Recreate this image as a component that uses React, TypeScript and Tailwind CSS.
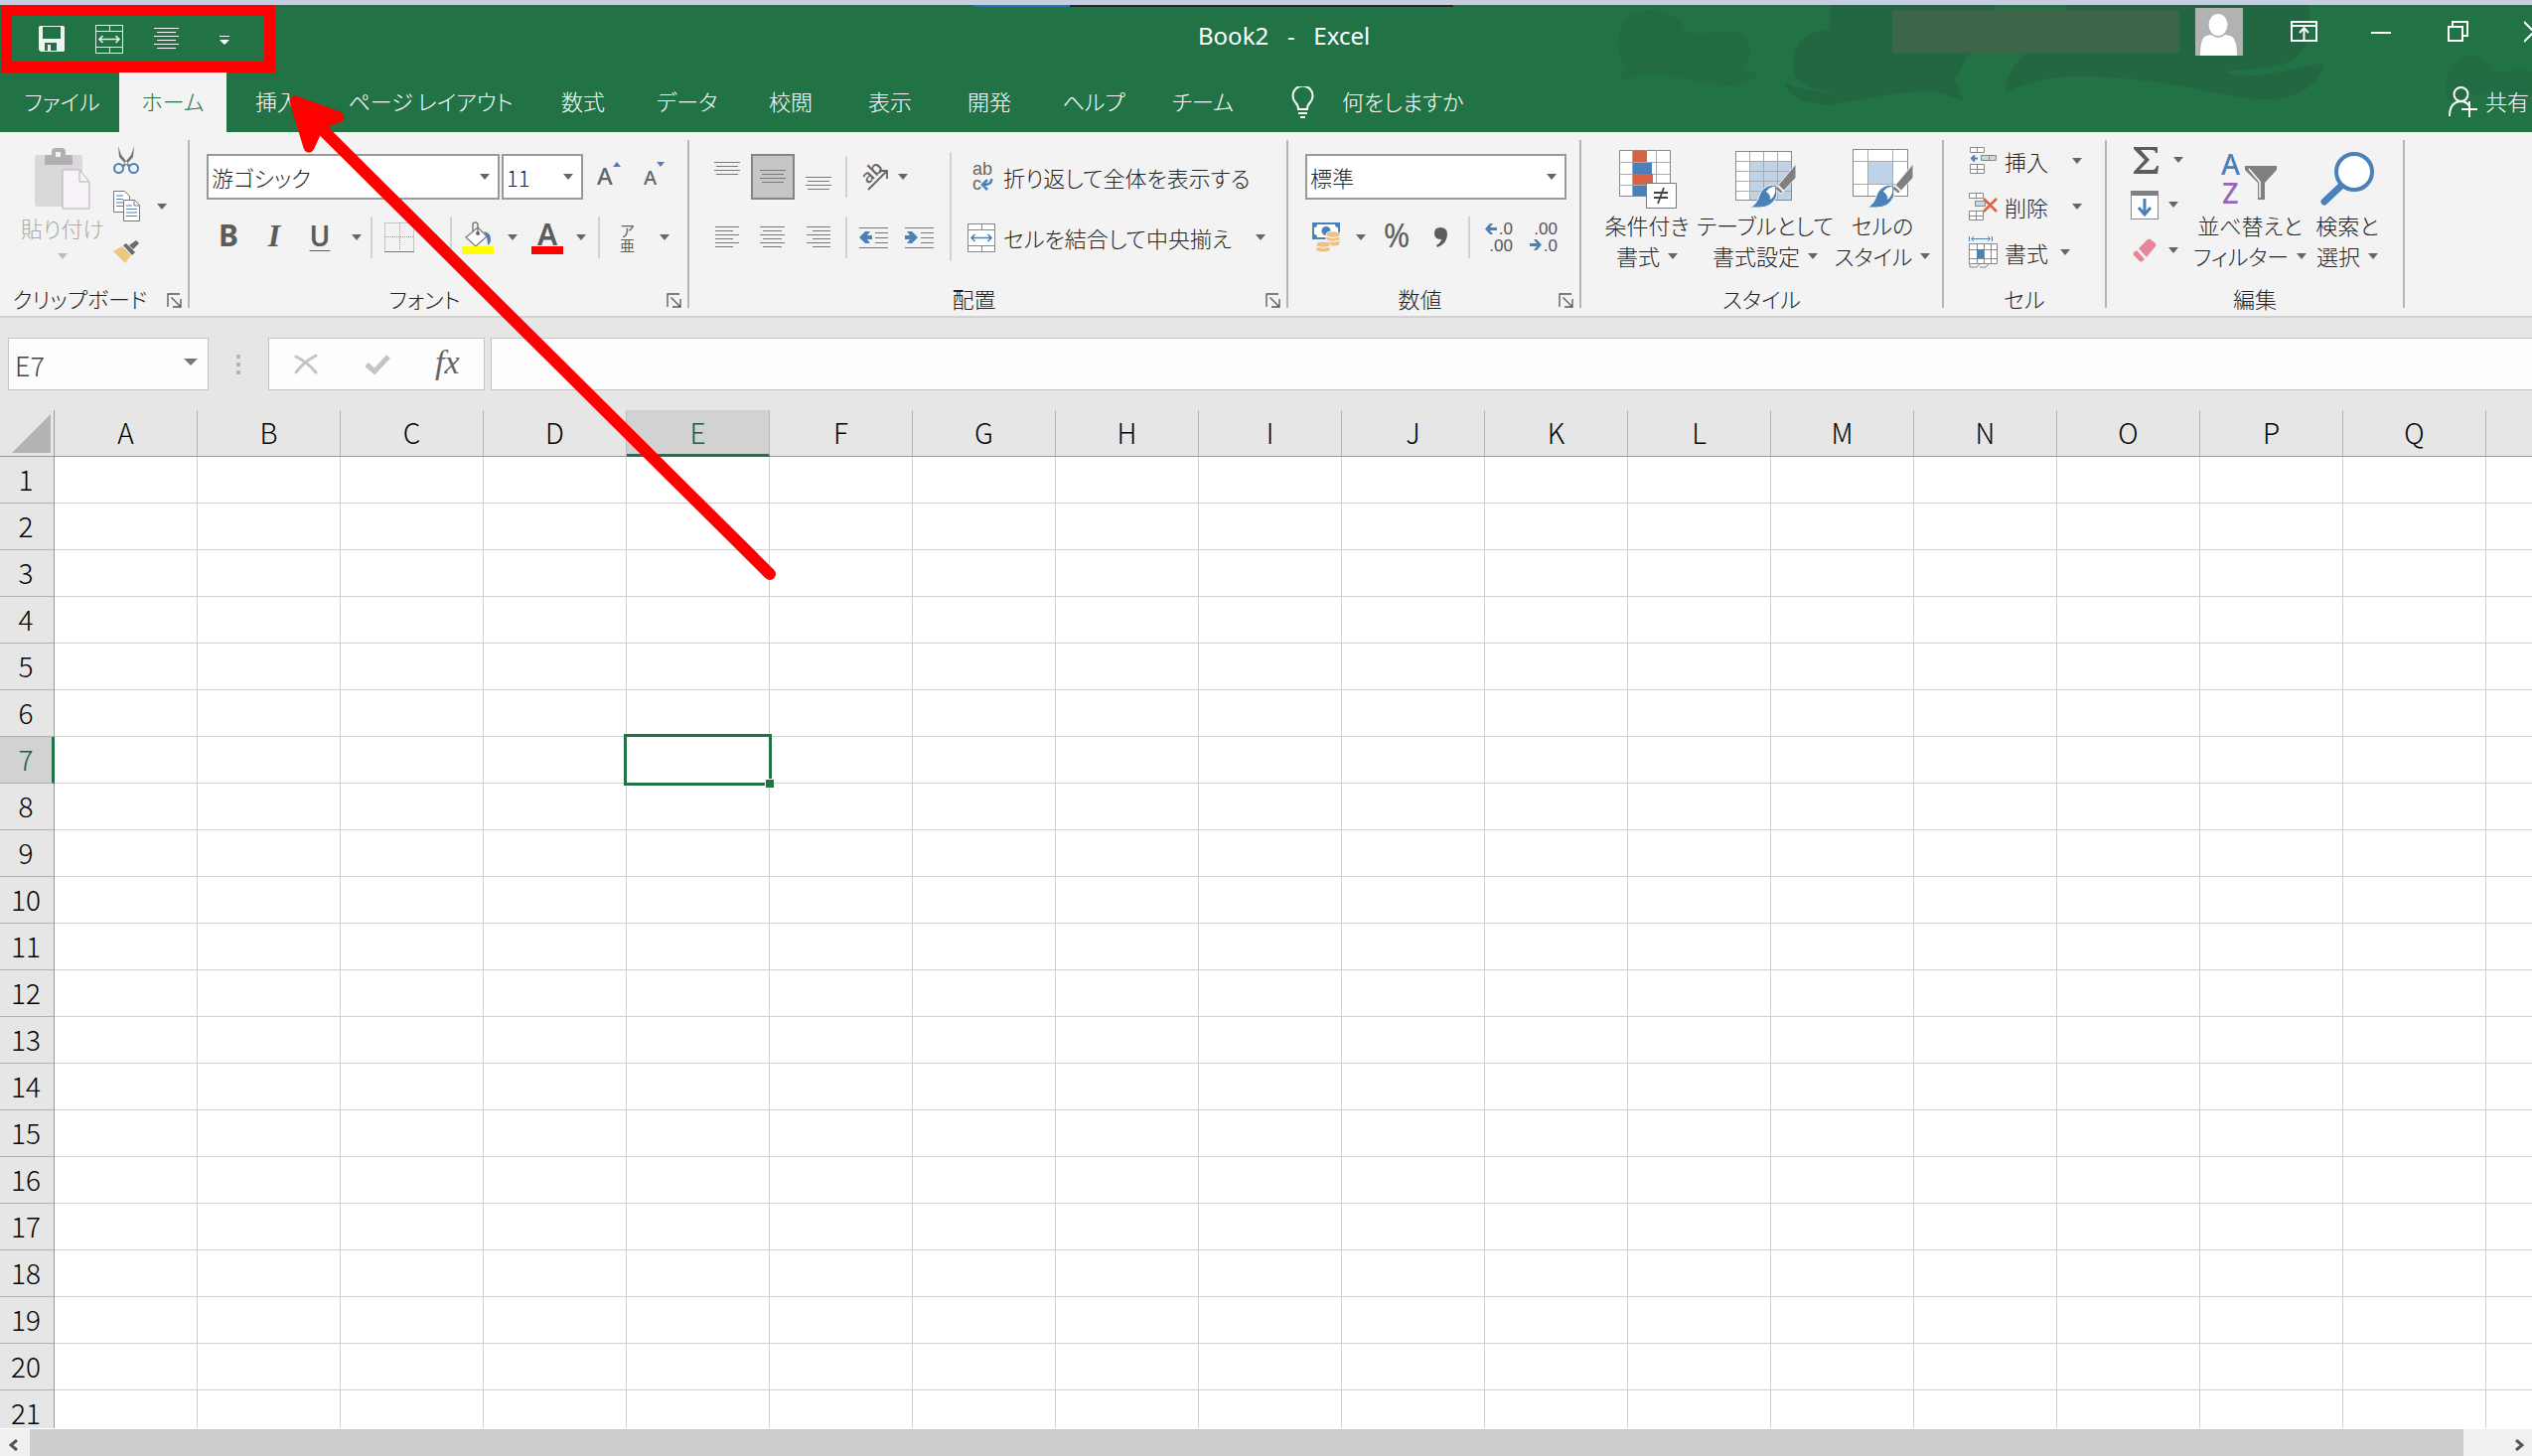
import React, { useState } from "react";

const COLUMNS = "ABCDEFGHIJKLMNOPQ".split("");
const ROWS = Array.from({ length: 21 }, (_, i) => i + 1);

const TABS = [
  { label: "ファイル", width: "w-[115px]" },
  { label: "ホーム", width: "w-[108px]" },
  { label: "挿入", width: "w-[102px]" },
  { label: "ページ レイアウト", width: "w-[207px]" },
  { label: "数式", width: "w-[100px]" },
  { label: "データ", width: "w-[109px]" },
  { label: "校閲", width: "w-[100px]" },
  { label: "表示", width: "w-[100px]" },
  { label: "開発", width: "w-[100px]" },
  { label: "ヘルプ", width: "w-[110px]" },
  { label: "チーム", width: "w-[110px]" },
];

/* Small shared pieces */

const Caret = ({ className = "" }: { className?: string }) => (
  <svg className={`shrink-0 ${className}`} width="10" height="6" viewBox="0 0 10 6" aria-hidden="true">
    <path d="M0 0h10L5 6z" fill="currentColor" />
  </svg>
);

const CaretButton = ({ label, className = "" }: { label: string; className?: string }) => (
  <button aria-label={label} className={`flex h-8 items-center justify-center text-[#666] ${className}`}>
    <Caret />
  </button>
);

const Divider = ({ className = "h-[42px]" }: { className?: string }) => (
  <div className={`w-[2px] shrink-0 bg-[#d2d2d2] ${className}`} />
);

const Lines = ({ rows, width, color = "#777" }: { rows: number[][]; width: number; color?: string }) => (
  <svg width={width} height={rows.length * 4} viewBox={`0 0 ${width} ${rows.length * 4}`} shapeRendering="crispEdges" aria-hidden="true">
    {rows.map(([x, w], i) => (
      <rect key={i} x={x} y={i * 4 + 1} width={w} height="1" fill={color} />
    ))}
  </svg>
);

const VALIGN_ROWS = [[0, 26], [2, 22], [0, 26], [2, 22]];
const LEFT_ROWS = [[0, 24], [0, 18], [0, 24], [0, 18], [0, 24], [0, 18]];
const CENTER_ROWS = [[0, 25], [3, 19], [0, 25], [3, 19], [0, 25], [3, 19]];
const RIGHT_ROWS = [[0, 24], [6, 18], [0, 24], [6, 18], [0, 24], [6, 18]];

type GroupProps = {
  title: string;
  width: string;
  launcher?: boolean;
  children: React.ReactNode;
};

const Group = ({ title, width, launcher = false, children }: GroupProps) => (
  <section aria-label={title} className={`flex shrink-0 flex-col border-r-2 border-[#b4b4b4] ${width}`}>
    <div className="min-h-0 flex-1">{children}</div>
    <div className="flex h-5 items-center">
      <span className="flex-1 text-center leading-5 whitespace-nowrap">{title}</span>
      {launcher && (
        <button aria-label={`${title}の詳細設定`} className="flex w-7 items-center justify-center pt-1">
          <svg width="15" height="15" viewBox="0 0 15 15" fill="none" stroke="#555" strokeWidth="1.3" aria-hidden="true">
            <path d="M1 14V1h12M4.500 4.500l9 9M14 6v8H6" />
          </svg>
        </button>
      )}
    </div>
  </section>
);

/* Icons */

const MergeIcon = ({ line, arrow, fill }: { line: string; arrow: string; fill: string }) => (
  <svg width="28" height="29" viewBox="0 0 28 29" fill="none" aria-hidden="true">
    <rect x="0.500" y="0.500" width="27" height="28" fill={fill} stroke={line} />
    <path d="M0 6.500h28M0 22.500h28M14.500 0v6M14.500 23v6" stroke={line} />
    <path d="M4 14.500h20M7.500 11L4 14.500 7.500 18M20.500 11l3.500 3.500-3.500 3.500" stroke={arrow} strokeWidth="1.6" />
  </svg>
);

const SaveIcon = () => (
  <svg width="26" height="26" viewBox="0 0 26 26" aria-hidden="true">
    <path fillRule="evenodd" d="M1 0h24l1 1v24l-1 1H2l-2-2V1zM4 1v12h18V1zM6 17v8h3v-6h3v6h6v-8z" fill="#f0f5f1" />
  </svg>
);

const PasteIcon = () => (
  <svg width="58" height="62" viewBox="0 0 58 62" aria-hidden="true">
    <rect x="1" y="7" width="48" height="52" rx="3" fill="#dbd8db" />
    <path d="M11 17V9q0-2 2-2h5V4q0-4 4-4h6q4 0 4 4v3h5q2 0 2 2v8z" fill="#b1afb1" />
    <rect x="22" y="4" width="5" height="5" fill="#f2f2f2" />
    <path d="M29 22h17l10 12v27H29z" fill="#f6f2f8" stroke="#b5b2b5" />
    <path d="M46 22v12h10" fill="none" stroke="#b5b2b5" />
  </svg>
);

const ScissorsIcon = () => (
  <svg width="26" height="29" viewBox="0 0 26 29" fill="none" aria-hidden="true">
    <path d="M5 0l3 9 9 11-2 1-9-10zM21 0l-3 9-9 11 2 1 9-10z" fill="#737373" />
    <circle cx="5.500" cy="22.500" r="4.500" stroke="#4a81b9" strokeWidth="2" />
    <circle cx="20.500" cy="22.500" r="4.500" stroke="#4a81b9" strokeWidth="2" />
  </svg>
);

const CopyIcon = () => (
  <svg width="28" height="31" viewBox="0 0 28 31" aria-hidden="true">
    <path d="M0.500 0.500h11l5 5v16h-16z" fill="#fff" stroke="#777" />
    <path d="M3 5h7M3 8.500h7M3 12h7M3 15.500h7" stroke="#4a81b9" />
    <path d="M10.500 9.500h11l5 5v16h-16z" fill="#fff" stroke="#777" />
    <path d="M21 9.500v5.500h6" fill="none" stroke="#777" />
    <path d="M13 15h6M13 18.500h11M13 22h11M13 25.500h11" stroke="#4a81b9" />
  </svg>
);

const FormatPainterIcon = () => (
  <svg width="26" height="23" viewBox="0 0 26 23" aria-hidden="true">
    <path d="M0 11l9-5 9 9-6 8z" fill="#edc87f" />
    <path d="M10 5l3-2 9 9-3 3z" fill="#6b6b6b" />
    <path d="M16 5l7-5 3 3-6 6z" fill="#6b6b6b" />
  </svg>
);

const BordersIcon = () => (
  <svg width="30" height="30" viewBox="0 0 30 30" fill="none" stroke="#999" aria-hidden="true">
    <path d="M0.500 0.500h29v28M0.500 0.500v28M15.500 0v28M0 14.500h30" strokeDasharray="1 1" />
    <path d="M0 29.500h30" stroke="#777" />
  </svg>
);

const FillColorIcon = () => (
  <svg width="32" height="33" viewBox="0 0 32 33" fill="none" aria-hidden="true">
    <path d="M16 6l9 9-11 10-10-9z" fill="#fff" stroke="#777" strokeWidth="1.200" />
    <path d="M11 10V3q0-2 2.500-2T16 3v9" stroke="#777" strokeWidth="1.400" />
    <circle cx="16" cy="12" r="2" fill="#666" />
    <path d="M22 10q7 1 7 8 0 4-3 6 0-8-4-14z" fill="#4a81b9" />
    <path d="M0 25h32v8H0z" fill="#ff0" />
  </svg>
);

const OrientationIcon = () => (
  <svg className="overflow-visible font-['Noto_Sans',sans-serif] font-medium" width="30" height="28" viewBox="0 0 30 28" fill="none" aria-hidden="true">
    <text x="9" y="22" transform="rotate(-45 9 22)" fontSize="19" fill="#666">ab</text>
    <path d="M9 27L28 8M20 8h8v8" stroke="#666" strokeWidth="1.800" />
  </svg>
);

const IndentIcon = ({ right = false }: { right?: boolean }) => (
  <svg width="29" height="23" viewBox="0 0 29 23" fill="none" aria-hidden="true">
    <path d="M0 1.500h29M16 6.500h13M16 11.500h13M16 16.500h13M0 21.500h29" stroke="#777" />
    <path d={right ? "M0 9h5l-3-4h5l6 6-6 6H2l3-4H0z" : "M13 9H8l3-4H6l-6 6 6 6h5l-3-4h5z"} fill="#4a81b9" />
  </svg>
);

const WrapIcon = () => (
  <svg className="overflow-visible font-['Liberation_Sans',sans-serif] font-normal" width="24" height="30" viewBox="0 0 24 30" fill="none" aria-hidden="true">
    <text x="1" y="13" fontSize="18" fill="#666">ab</text>
    <text x="1" y="28" fontSize="18" fill="#666">c</text>
    <path d="M20 17q1 6-8 6M16 18l-5 5 5 5" stroke="#4a81b9" strokeWidth="2.500" />
  </svg>
);

const MoneyIcon = () => (
  <svg width="29" height="30" viewBox="0 0 29 30" aria-hidden="true">
    <rect width="28" height="17" fill="#4a81b9" />
    <path d="M5 2h18q0 3 3 3v7q-3 0-3 3H5q0-3-3-3V5q3 0 3-3z" fill="#fff" />
    <circle cx="14" cy="8.500" r="4.500" fill="#4a81b9" />
    <path d="M14 12q0-3 7-3t7 3v9q0 3-7 3t-7-3z" fill="#edc184" stroke="#f2f2f2" />
    <path d="M14 14q7 3 14 0M14 18q7 3 14 0" fill="none" stroke="#fff" />
    <path d="M4 22q0-3 7-3t7 3v5q0 3-7 3t-7-3z" fill="#edc184" stroke="#f2f2f2" />
    <path d="M4 24q7 3 14 0" fill="none" stroke="#fff" />
  </svg>
);

const DecimalIcon = ({ decrease = false }: { decrease?: boolean }) => (
  <svg className="overflow-visible font-['Liberation_Sans',sans-serif] font-normal" width="30" height="32" viewBox="0 0 30 32" aria-hidden="true">
    <text x="29" y="13" textAnchor="end" fontSize="17" fill="#555">{decrease ? ".00" : ".0"}</text>
    <text x="29" y="30" textAnchor="end" fontSize="17" fill="#555">{decrease ? ".0" : ".00"}</text>
    {decrease ? (
      <path d="M1 22h7l-3-4h3l5 5.500-5 5.500H5l3-4H1z" fill="#4a81b9" />
    ) : (
      <path d="M13 6H6l3-4H6L1 7.500 6 13h3L6 9h7z" fill="#4a81b9" />
    )}
  </svg>
);

const BrushOverlay = () => (
  <>
    <path d="M62 15v14L47 45l-6-5z" fill="#808080" stroke="#f2f2f2" />
    <path d="M44 37l6 6" stroke="#f2f2f2" strokeWidth="2" />
    <path d="M16 59q7-4 9-12 3-9 13-11 7 5 4 13-5 10-17 10z" fill="#4a81b9" stroke="#f2f2f2" />
    <path d="M31 43q5-6 10-6 3 8-5 15 0-7-5-9z" fill="#fff" stroke="#4a81b9" />
  </>
);

const ConditionalIcon = () => (
  <svg width="60" height="60" viewBox="0 0 60 60" aria-hidden="true">
    <rect x="2.500" y="1.500" width="51" height="46" fill="#fff" stroke="#888" />
    <path d="M15.500 1v46M28.500 1v46M39.500 1v46M2 13.500h51M2 25.500h51M2 36.500h51" stroke="#aaa" />
    <path d="M16 2h14v11H16zM16 25h20v11H16z" fill="#d86344" />
    <path d="M16 14h19v11H16zM16 37h13v10H16z" fill="#4a81b9" />
    <path d="M29.500 34.500h30v25h-30z" fill="#fff" stroke="#777" />
    <path d="M37 44h14M37 49h14M47 39l-6 16" stroke="#444" strokeWidth="1.800" />
  </svg>
);

const TableStyleIcon = () => (
  <svg width="62" height="60" viewBox="0 0 62 60" fill="none" aria-hidden="true">
    <rect x="1.500" y="2.500" width="56" height="49" fill="#fff" stroke="#888" />
    <path d="M15 13h42v38H15z" fill="#bfd3e8" />
    <path d="M15.500 3v48M29.500 3v48M43.500 3v48M2 12.500h55M2 22.500h55M2 32.500h55M2 42.500h55" stroke="#aaa" />
    <BrushOverlay />
  </svg>
);

const CellStyleIcon = () => (
  <svg width="62" height="60" viewBox="0 0 62 60" fill="none" aria-hidden="true">
    <rect x="1.500" y="0.500" width="55" height="47" fill="#fff" stroke="#888" />
    <path d="M16 13h25v22H16z" fill="#bfd3e8" />
    <path d="M16.500 1v46M41.500 1v46M2 12.500h55M2 35.500h55" stroke="#aaa" />
    <BrushOverlay />
  </svg>
);

const InsertCellIcon = () => (
  <svg width="29" height="28" viewBox="0 0 29 28" fill="#fff" stroke="#888" aria-hidden="true">
    <path d="M1.500 0.500h14v5h-14zM8.500 0.500v5M1.500 17.500h14v9h-14zM8.500 17.500v9M1.500 22.500h14" />
    <path d="M12.500 8.500h15v5h-15zM20.500 9v5" fill="#c5d9e8" />
    <path d="M9 11.500H3M6 8.500l-3 3 3 3" fill="none" stroke="#4a81b9" strokeWidth="2" />
  </svg>
);

const DeleteCellIcon = () => (
  <svg width="29" height="28" viewBox="0 0 29 28" fill="#fff" stroke="#888" aria-hidden="true">
    <path d="M0.500 0.500h14v5h-14zM7.500 0.500v5M0.500 18.500h14v9h-14zM7.500 18.500v9M0.500 23.500h14" />
    <path d="M6.500 8.500h10v5h-10z" fill="#c5d9e8" />
    <path d="M15 6l13 13M28 6L15 19" fill="none" stroke="#d86344" strokeWidth="2.500" />
  </svg>
);

const FormatCellIcon = () => (
  <svg width="29" height="32" viewBox="0 0 29 32" fill="none" stroke="#888" aria-hidden="true">
    <path d="M0.500 7.500h28v20h-28z" fill="#fff" />
    <path d="M8.500 7v21M15.500 7v21M22.500 7v21M0 13.500h28M0 22.500h28M1 28v3h7l3-3M11 31h6l3-3" />
    <path d="M8 13h7v9H8z" fill="#4a81b9" stroke="none" />
    <path d="M0.500 0v5M23.500 0v5M3 2.500h18M5 0L2.500 2.500 5 5M19 0l2.500 2.500L19 5" stroke="#4a81b9" />
  </svg>
);

const SigmaIcon = () => (
  <svg width="25" height="27" viewBox="0 0 25 27" aria-hidden="true">
    <path d="M0 0h24v6h-2q0-3-4-3H7l9 10-10 10h13q3 0 4-4h2l-1 8H0v-2l11-12L0 2z" fill="#5c5c5c" />
  </svg>
);

const FillDownIcon = () => (
  <svg width="28" height="29" viewBox="0 0 28 29" fill="none" aria-hidden="true">
    <rect x="0.500" y="0.500" width="27" height="28" fill="#fff" stroke="#888" />
    <path d="M0 0h28v5H0z" fill="#808080" />
    <path d="M14 8v15M8 17l6 7 6-7" stroke="#4a81b9" strokeWidth="3" />
  </svg>
);

const EraserIcon = () => (
  <svg width="24" height="24" viewBox="0 0 24 24" aria-hidden="true">
    <path d="M6 10L15 1q2-1 3 0l5 4q1 2 0 3L14 19z" fill="#e6869a" />
    <path d="M4 12l8 9-2 2q-2 1-3 0l-6-6q-1-1 0-3z" fill="#e6869a" />
  </svg>
);

const SortFilterIcon = () => (
  <svg className="font-['Noto_Sans',sans-serif] font-medium" width="58" height="54" viewBox="0 0 58 54" aria-hidden="true">
    <text x="0" y="23" fontSize="29" fill="#4a81b9">A</text>
    <text x="1" y="52" fontSize="29" fill="#9a67b7">Z</text>
    <path d="M24 14h32v4L44 31v17h-7V31L24 18z" fill="#808080" />
    <path d="M28 17l11 13v16" fill="none" stroke="#fff" strokeWidth="1.500" />
  </svg>
);

const SearchIcon = () => (
  <svg width="54" height="54" viewBox="0 0 54 54" fill="none" aria-hidden="true">
    <path d="M22 33L4 50" stroke="#4a81b9" strokeWidth="7" strokeLinecap="round" />
    <circle cx="34" cy="20" r="18" fill="#fff" stroke="#4a81b9" strokeWidth="4" />
  </svg>
);

/* Title bar and tabs */

const HeaderArt = () => (
  <svg className="pointer-events-none absolute top-0 right-0" width="1009" height="128" viewBox="0 0 1009 128" fill="#236440" aria-hidden="true">
    <path opacity="0.5" d="M88 78L97 62C80 40 90 5 122 5c18 0 30 10 35 22 13 6 38-5 58 1 10 12 7 32-3 38h17c-1 10-14 16-29 15C170 80 120 60 88 78z" />
    <path opacity="0.8" d="M302 0v25c-32 3-37 15-36 45 4 12 24 16 42 17-18 1-40-3-50-8-2 13 22 21 42 21 30-1 60-15 112-12l24 8-8-21c12-15 8-25 22-30L470 0z" />
    <path opacity="0.8" d="M479 88c1-28 21-43 55-60l6-28h245v30c-10 30-23 32-84 37 19 11 59-1 99-9-2 22-30 38-60 37-50-2-100-23-187-23-33 0-58 8-74 16z" />
    <path opacity="0.5" d="M925 98c-6-22 2-46 20-47 12 0 20 8 23 18 14-4 28-4 41-2v22c-30 0-60-4-84 9z" />
  </svg>
);

const QuickAccess = () => (
  <div className="flex h-[68px] w-[276px] items-center border-[11px] border-[#f00] pl-[27px]">
    <button aria-label="上書き保存" className="w-[57px]">
      <SaveIcon />
    </button>
    <button aria-label="セルを結合して中央揃え" className="w-[59px]">
      <MergeIcon line="#e6f0ea" arrow="#e6f0ea" fill="none" />
    </button>
    <button aria-label="中央揃え" className="w-[66px]">
      <Lines rows={CENTER_ROWS} width={25} color="#fff" />
    </button>
    <button aria-label="クイック アクセス ツール バーのユーザー設定" className="pt-1">
      <svg width="10" height="10" viewBox="0 0 10 10" fill="#fff" aria-hidden="true">
        <path d="M0 0h10v1H0zM0 4h10L5 9z" />
      </svg>
    </button>
  </div>
);

const TitleBar = () => (
  <header className="relative flex h-[68px] items-start">
    <QuickAccess />
    <h1 className="w-0 flex-1 pt-[15px] pl-[929px] font-['Noto_Sans',sans-serif] text-[24px] leading-8 font-normal whitespace-pre">
      {"Book2   -   Excel"}
    </h1>
    <div className="mt-[5px] h-[43px] w-[289px] shrink-0 bg-[#3d654a]" />
    <svg className="mt-[3px] ml-4 shrink-0" width="48" height="48" viewBox="0 0 48 48" role="img" aria-label="アカウント">
      <path d="M0 0h48v48H0z" fill="#b2b2b2" />
      <ellipse cx="23" cy="17" rx="9.500" ry="11" fill="#fff" />
      <path d="M5 48q0-18 6-20l5-1q7 6 14 0l5 1q7 2 7 20z" fill="#fff" />
    </svg>
    <button aria-label="リボンの表示オプション" className="mt-4 ml-12 shrink-0">
      <svg width="27" height="22" viewBox="0 0 27 22" fill="none" stroke="#fff" strokeWidth="2" aria-hidden="true">
        <path d="M1 1h25v19H1zM1 5h25M13.500 20V8M9 12l4.500-5 4.500 5" />
      </svg>
    </button>
    <button aria-label="最小化" className="mt-4 ml-[54px] shrink-0">
      <svg width="20" height="22" viewBox="0 0 20 22" aria-hidden="true">
        <path d="M0 11h20v2H0z" fill="#fff" />
      </svg>
    </button>
    <button aria-label="元に戻す (縮小)" className="mt-4 ml-[57px] shrink-0">
      <svg width="21" height="22" viewBox="0 0 21 22" fill="none" stroke="#fff" strokeWidth="2" aria-hidden="true">
        <path d="M1 6h14v14H1zM5 6V1h15v14h-5" />
      </svg>
    </button>
    <button aria-label="閉じる" className="mt-4 ml-14 w-2 shrink-0 overflow-hidden">
      <svg width="20" height="22" viewBox="0 0 20 22" stroke="#fff" strokeWidth="2" aria-hidden="true">
        <path d="M0 1l20 20M20 1L0 21" />
      </svg>
    </button>
  </header>
);

const TabBar = ({ active, onSelect }: { active: string; onSelect: (tab: string) => void }) => (
  <nav className="relative flex h-[60px] items-stretch overflow-hidden pl-1">
    {TABS.map((tab) => (
      <button
        key={tab.label}
        onClick={() => onSelect(tab.label)}
        className={`shrink-0 pb-1 whitespace-nowrap ${tab.width} ${
          tab.label === active ? "bg-[#f3f3f3] text-[#217346]" : "text-white"
        }`}
      >
        {tab.label}
      </button>
    ))}
    <button className="flex shrink-0 items-center gap-7 pb-1 pl-[34px]">
      <svg className="mt-1" width="23" height="33" viewBox="0 0 23 33" fill="none" stroke="#fff" strokeWidth="2" aria-hidden="true">
        <path d="M7 23q0-4-3-7a10 10 0 1 1 15 0q-3 3-3 7zM7 27h9M9 31h5" />
      </svg>
      <span>何をしますか</span>
    </button>
    <button className="ml-auto flex w-[84px] shrink-0 items-center gap-2 overflow-hidden pb-1 whitespace-nowrap">
      <svg className="mt-1 shrink-0" width="29" height="32" viewBox="0 0 29 32" fill="none" stroke="#fff" strokeWidth="2" aria-hidden="true">
        <circle cx="12.500" cy="8" r="7" />
        <path d="M1 30q0-14 11-15 6 0 9 5M21 15v16M13 23h16" />
      </svg>
      <span>共有</span>
    </button>
  </nav>
);

/* Ribbon */

const BigButton = ({ icon, lines, className = "" }: { icon: React.ReactNode; lines: string[]; className?: string }) => (
  <button className={`flex shrink-0 flex-col items-center leading-[31px] whitespace-nowrap ${className}`}>
    <span className="flex h-[62px] items-center">{icon}</span>
    <span>{lines[0]}</span>
    <span className="flex items-center gap-2">
      {lines[1]}
      <Caret className="text-[#666]" />
    </span>
  </button>
);

const ComboBox = ({ label, value, options, className }: { label: string; value: string; options: string[]; className: string }) => (
  <div className={`relative h-[46px] shrink-0 ${className}`}>
    <select
      aria-label={label}
      defaultValue={value}
      className="h-full w-full appearance-none border-2 border-[#999] bg-white px-[3px] text-[#222]"
    >
      {options.map((option) => (
        <option key={option}>{option}</option>
      ))}
    </select>
    <Caret className="pointer-events-none absolute top-5 right-[10px] text-[#666]" />
  </div>
);

const ClipboardGroup = () => (
  <Group title="クリップボード" width="w-[191px]" launcher>
    <div className="flex">
      <button className="flex w-[106px] flex-col items-center pt-2 pl-5 text-[#aaa]">
        <PasteIcon />
        <span className="leading-9 whitespace-nowrap">貼り付け</span>
        <Caret className="mt-2 text-[#bbb]" />
      </button>
      <div className="flex flex-col pt-[6px] pl-2">
        <button aria-label="切り取り" className="h-[45px] pb-4">
          <ScissorsIcon />
        </button>
        <div className="flex h-[46px] items-start gap-4">
          <button aria-label="コピー">
            <CopyIcon />
          </button>
          <CaretButton label="コピーのオプション" />
        </div>
        <button aria-label="書式のコピー/貼り付け" className="flex pt-1">
          <FormatPainterIcon />
        </button>
      </div>
    </div>
  </Group>
);

const FontGroup = () => (
  <Group title="フォント" width="w-[503px]" launcher>
    <div className="mt-[14px] flex h-[46px] pl-[17px] text-[#666]">
      <ComboBox label="フォント" value="游ゴシック" options={["游ゴシック", "游明朝", "メイリオ"]} className="w-[295px]" />
      <ComboBox label="フォント サイズ" value="11" options={["9", "10", "11", "12", "14"]} className="ml-[2px] w-[82px]" />
      <button aria-label="フォント サイズの拡大" className="ml-[14px] flex w-[47px] items-start pt-[6px]">
        <span className="font-['Noto_Sans',sans-serif] text-[24px] leading-8 font-medium">A</span>
        <svg className="mt-[2px]" width="8" height="5" viewBox="0 0 8 5" aria-hidden="true">
          <path d="M0 5h8L4 0z" fill="#4a81b9" />
        </svg>
      </button>
      <button aria-label="フォント サイズの縮小" className="flex items-start pt-[6px]">
        <span className="font-['Noto_Sans',sans-serif] text-[20px] leading-9 font-medium">A</span>
        <svg className="mt-[2px]" width="8" height="5" viewBox="0 0 8 5" aria-hidden="true">
          <path d="M0 0h8L4 5z" fill="#4a81b9" />
        </svg>
      </button>
    </div>
    <div className="mt-4 flex h-[44px] items-center pl-4 font-['Noto_Sans',sans-serif] text-[#5c5c5c]">
      <button aria-label="太字" className="w-[46px] pb-1 text-center text-[30px] leading-8 font-bold">B</button>
      <button aria-label="斜体" className="w-[46px] pb-1 text-center font-['Liberation_Serif',serif] text-[32px] leading-8 font-bold italic">I</button>
      <button aria-label="下線" className="w-[46px] pb-1 text-center text-[28px] leading-8 font-semibold underline decoration-1 underline-offset-4">U</button>
      <CaretButton label="下線のオプション" className="w-7" />
      <Divider />
      <button aria-label="罫線" className="ml-3">
        <BordersIcon />
      </button>
      <CaretButton label="罫線のオプション" className="w-9" />
      <Divider />
      <button aria-label="塗りつぶしの色" className="ml-[10px]">
        <FillColorIcon />
      </button>
      <CaretButton label="塗りつぶしの色のオプション" className="w-[38px]" />
      <button aria-label="フォントの色" className="flex h-[34px] w-8 items-start justify-center border-b-8 border-[#f00]">
        <span className="text-[30px] leading-7 font-semibold">A</span>
      </button>
      <CaretButton label="フォントの色のオプション" className="w-[35px]" />
      <Divider />
      <button aria-label="ふりがなの表示" className="ml-5 flex flex-col items-center font-['Noto_Sans_CJK_JP',sans-serif] text-[15px] leading-[15px] font-normal">
        <span>ア</span>
        <span>亜</span>
      </button>
      <CaretButton label="ふりがなのオプション" className="ml-3 w-9" />
    </div>
  </Group>
);

const AlignmentGroup = () => (
  <Group title="配置" width="w-[603px]" launcher>
    <div className="flex">
      <div className="w-[262px]">
        <div className="mt-[14px] flex h-[46px] items-center pl-[25px]">
          <button aria-label="上揃え" className="h-full w-[37px] pb-4">
            <Lines rows={VALIGN_ROWS} width={26} />
          </button>
          <button aria-label="上下中央揃え" aria-pressed="true" className="flex h-full w-[44px] items-center justify-center border-2 border-[#858585] bg-[#c6c6c6]">
            <Lines rows={VALIGN_ROWS} width={26} />
          </button>
          <button aria-label="下揃え" className="flex h-full w-[51px] items-end pb-2 pl-[11px]">
            <Lines rows={VALIGN_ROWS} width={26} />
          </button>
          <Divider />
          <button aria-label="方向" className="ml-3 flex items-center gap-[9px] text-[#666]">
            <OrientationIcon />
            <Caret />
          </button>
        </div>
        <div className="mt-4 flex h-[44px] items-center pl-[26px]">
          <button aria-label="左揃え" className="w-[45px]">
            <Lines rows={LEFT_ROWS} width={24} />
          </button>
          <button aria-label="中央揃え" className="w-[47px]">
            <Lines rows={CENTER_ROWS} width={25} />
          </button>
          <button aria-label="右揃え" className="w-[39px]">
            <Lines rows={RIGHT_ROWS} width={24} />
          </button>
          <Divider />
          <button aria-label="インデントを減らす" className="ml-3 w-[46px]">
            <IndentIcon />
          </button>
          <button aria-label="インデントを増やす">
            <IndentIcon right />
          </button>
        </div>
      </div>
      <Divider className="mt-3 h-[110px]" />
      <div className="text-[#222]">
        <button className="mt-[14px] flex h-[46px] items-center gap-2 pl-5 whitespace-nowrap">
          <WrapIcon />
          折り返して全体を表示する
        </button>
        <button className="mt-4 flex h-[44px] items-center gap-2 pl-4 whitespace-nowrap">
          <MergeIcon line="#888" arrow="#4a81b9" fill="#fff" />
          セルを結合して中央揃え
          <Caret className="ml-4 text-[#666]" />
        </button>
      </div>
    </div>
  </Group>
);

const NumberGroup = () => (
  <Group title="数値" width="w-[295px]" launcher>
    <div className="mt-[14px] flex h-[46px] pl-[17px]">
      <ComboBox label="表示形式" value="標準" options={["標準", "数値", "通貨", "日付"]} className="w-[263px]" />
    </div>
    <div className="mt-4 flex h-[44px] items-center pl-6 text-[#5c5c5c]">
      <button aria-label="通貨表示形式">
        <MoneyIcon />
      </button>
      <CaretButton label="通貨のオプション" className="w-[40px]" />
      <button aria-label="パーセント スタイル" className="w-8 pb-1 text-center font-['Noto_Sans',sans-serif] text-[32px] leading-8 font-normal">%</button>
      <button aria-label="桁区切りスタイル" className="flex w-14 justify-center">
        <svg width="13" height="20" viewBox="0 0 13 20" aria-hidden="true">
          <path d="M6 0q7 0 7 7 0 9-10 13l-1-2q5-3 5-6-7 0-7-6 0-6 6-6z" fill="currentColor" />
        </svg>
      </button>
      <Divider />
      <button aria-label="小数点以下の表示桁数を増やす" className="ml-[14px] w-[45px]">
        <DecimalIcon />
      </button>
      <button aria-label="小数点以下の表示桁数を減らす">
        <DecimalIcon decrease />
      </button>
    </div>
  </Group>
);

const StyleGroup = () => (
  <Group title="スタイル" width="w-[365px]">
    <div className="flex pt-2 pl-[14px]">
      <BigButton icon={<ConditionalIcon />} lines={["条件付き", "書式"]} className="w-[104px]" />
      <BigButton icon={<TableStyleIcon />} lines={["テーブルとして", "書式設定"]} className="w-[134px]" />
      <BigButton icon={<CellStyleIcon />} lines={["セルの", "スタイル"]} className="w-[102px]" />
    </div>
  </Group>
);

const CELL_ACTIONS = [
  { label: "挿入", icon: <InsertCellIcon />, gap: "gap-6" },
  { label: "削除", icon: <DeleteCellIcon />, gap: "gap-6" },
  { label: "書式", icon: <FormatCellIcon />, gap: "gap-3" },
];

const CellsGroup = () => (
  <Group title="セル" width="w-[164px]">
    {CELL_ACTIONS.map(({ label, icon, gap }) => (
      <button key={label} className={`flex h-[46px] items-center pb-1 pl-[25px] ${gap}`}>
        <span className="flex items-center gap-[7px] whitespace-nowrap">
          {icon}
          {label}
        </span>
        <Caret className="text-[#666]" />
      </button>
    ))}
  </Group>
);

const EditGroup = () => (
  <Group title="編集" width="w-[300px]">
    <div className="flex">
      <div className="w-[86px]">
        <button aria-label="合計" className="flex h-10 items-center gap-[15px] pl-[27px]">
          <SigmaIcon />
          <Caret className="text-[#666]" />
        </button>
        <button aria-label="フィル" className="flex h-[50px] items-center gap-[10px] pl-6">
          <FillDownIcon />
          <Caret className="text-[#666]" />
        </button>
        <button aria-label="クリア" className="flex h-[42px] items-center gap-3 pl-[26px]">
          <EraserIcon />
          <Caret className="text-[#666]" />
        </button>
      </div>
      <BigButton icon={<SortFilterIcon />} lines={["並べ替えと", "フィルター"]} className="w-[116px] pt-2" />
      <BigButton icon={<SearchIcon />} lines={["検索と", "選択"]} className="w-[80px] pt-2" />
    </div>
  </Group>
);

const Ribbon = () => (
  <div className="flex h-[187px] shrink-0 overflow-hidden border-b-2 border-[#d0d0d0] bg-[#f3f3f3] py-2 text-[#222]">
    <ClipboardGroup />
    <FontGroup />
    <AlignmentGroup />
    <NumberGroup />
    <StyleGroup />
    <CellsGroup />
    <EditGroup />
  </div>
);

/* Formula bar and sheet */

const FormulaBar = () => (
  <div className="flex h-[93px] shrink-0 items-start pt-5 pl-2">
    <div className="flex h-[53px] w-[202px] items-center border border-[#c4c4c4] bg-[#fdfdfd] pr-[10px]">
      <input aria-label="名前ボックス" defaultValue="E7" className="w-0 flex-1 bg-transparent pt-1 pl-[6px] text-[27px] text-[#444] outline-none" />
      <button aria-label="名前の一覧" className="pb-1 text-[#777]">
        <svg width="14" height="7" viewBox="0 0 14 7" aria-hidden="true">
          <path d="M0 0h14L7 7z" fill="currentColor" />
        </svg>
      </button>
    </div>
    <div className="flex h-[53px] w-[60px] flex-col items-center justify-center gap-1">
      <span className="h-1 w-1 bg-[#b5b5b5]" />
      <span className="h-1 w-1 bg-[#b5b5b5]" />
      <span className="h-1 w-1 bg-[#b5b5b5]" />
    </div>
    <div className="flex h-[53px] w-[218px] items-center border border-[#c4c4c4] bg-[#fdfdfd] pl-[25px]">
      <button aria-label="キャンセル" className="w-[71px]">
        <svg width="24" height="22" viewBox="0 0 24 22" fill="none" stroke="#c4c4c4" strokeLinecap="round" aria-hidden="true">
          <path d="M2 3q12 6 20 16M22 2Q9 9 2 19" strokeWidth="3" />
        </svg>
      </button>
      <button aria-label="入力" className="w-[71px]">
        <svg width="26" height="22" viewBox="0 0 26 22" fill="none" stroke="#c4c4c4" strokeWidth="5" aria-hidden="true">
          <path d="M2 11l8 7L24 3" />
        </svg>
      </button>
      <button aria-label="関数の挿入" className="pb-1 font-['Liberation_Serif',serif] text-[34px] leading-9 font-normal text-[#666] italic">
        fx
      </button>
    </div>
    <input aria-label="数式バー" className="ml-[6px] h-[53px] w-0 flex-1 border border-r-0 border-[#c4c4c4] bg-[#fdfdfd] px-2 outline-none" />
  </div>
);

const Sheet = ({ activeColumn, activeRow }: { activeColumn: string; activeRow: number }) => (
  <main className="min-h-0 flex-1 overflow-hidden bg-white">
    <table className="w-full table-fixed border-separate border-spacing-0 text-[28px] leading-8 text-black">
      <colgroup>
        <col className="w-[55px]" />
        {COLUMNS.map((column) => (
          <col key={column} className="w-[144px]" />
        ))}
        <col />
      </colgroup>
      <thead>
        <tr className="h-[47px] bg-[#e6e6e6]">
          <th className="border-r border-b border-[#999] p-0">
            <svg className="mr-[3px] ml-auto" width="39" height="39" viewBox="0 0 39 39" aria-hidden="true">
              <path d="M39 0v39H0z" fill="#b4b4b4" />
            </svg>
          </th>
          {COLUMNS.map((column) => (
            <th
              key={column}
              scope="col"
              className={`border-r border-r-[#b8b8b8] p-0 font-light ${
                column === activeColumn
                  ? "border-b-[3px] border-b-[#217346] bg-[#d2d2d2] pb-px text-[#215c3d]"
                  : "border-b border-b-[#999] pb-[3px]"
              }`}
            >
              {column}
            </th>
          ))}
          <th className="border-b border-[#999] p-0" />
        </tr>
      </thead>
      <tbody>
        {ROWS.map((row) => (
          <tr key={row} className="h-[47px]">
            <th
              scope="row"
              className={`border-b border-b-[#b0b0b0] p-0 pb-[3px] font-light ${
                row === activeRow
                  ? "border-r-[3px] border-r-[#217346] bg-[#d2d2d2] text-[#215c3d]"
                  : "border-r border-r-[#999] bg-[#e6e6e6] pr-[2px]"
              }`}
            >
              {row}
            </th>
            {COLUMNS.map((column) => (
              <td key={column} className="border-r border-b border-[#d0d0d0] p-0">
                {column === activeColumn && row === activeRow && (
                  <div className="relative z-10 -mx-[3px] -my-[3px] h-[52px] border-[3px] border-[#217346]">
                    <span className="absolute -right-[5px] -bottom-[5px] h-[9px] w-[9px] border-t border-l border-white bg-[#217346]" />
                  </div>
                )}
              </td>
            ))}
            <td className="border-b border-[#d0d0d0] p-0" />
          </tr>
        ))}
      </tbody>
    </table>
  </main>
);

const ScrollBar = () => (
  <div className="flex h-7 shrink-0 border-t border-white bg-[#f0f0f0]">
    <button aria-label="左へスクロール" className="flex w-[30px] items-center justify-center pt-1 pr-1">
      <svg width="9" height="12" viewBox="0 0 9 12" fill="none" stroke="#555" strokeWidth="3" aria-hidden="true">
        <path d="M8 1L2 6l6 5" />
      </svg>
    </button>
    <div className="flex-1 bg-[#cdcdcd]" />
    <button aria-label="右へスクロール" className="flex w-[69px] items-center justify-end pt-1 pr-2">
      <svg width="9" height="12" viewBox="0 0 9 12" fill="none" stroke="#555" strokeWidth="3" aria-hidden="true">
        <path d="M1 1l6 5-6 5" />
      </svg>
    </button>
  </div>
);

/* Red arrow that points at the quick access toolbar */
const PointerArrow = () => (
  <svg className="pointer-events-none absolute top-0 left-0" width="800" height="600" viewBox="0 0 800 600" fill="#f00" stroke="#f00" strokeLinecap="round" strokeLinejoin="round" aria-hidden="true">
    <path d="M320 126L775 578" strokeWidth="12" fill="none" />
    <path d="M297 102l44 16-19 6-11 24z" strokeWidth="11" />
  </svg>
);

const App = () => {
  const [tab, setTab] = useState("ホーム");

  return (
    <div className="relative flex h-screen flex-col overflow-hidden bg-[#e6e6e6] font-['Noto_Sans_CJK_JP','Noto_Sans',sans-serif] text-[22px] font-light [font-feature-settings:'palt']">
      <div className="h-[5px] shrink-0 bg-[#c5cfe0]" />
      <div className="relative shrink-0 bg-[#217346] pl-px text-white">
        <HeaderArt />
        <div className="absolute top-0 left-[981px] flex h-[2px] w-[482px] bg-[#1d2b24]">
          <div className="w-24 bg-[#1c78b4]" />
        </div>
        <TitleBar />
        <TabBar active={tab} onSelect={setTab} />
      </div>
      <Ribbon />
      <FormulaBar />
      <Sheet activeColumn="E" activeRow={7} />
      <ScrollBar />
      <PointerArrow />
    </div>
  );
};

export default App;
